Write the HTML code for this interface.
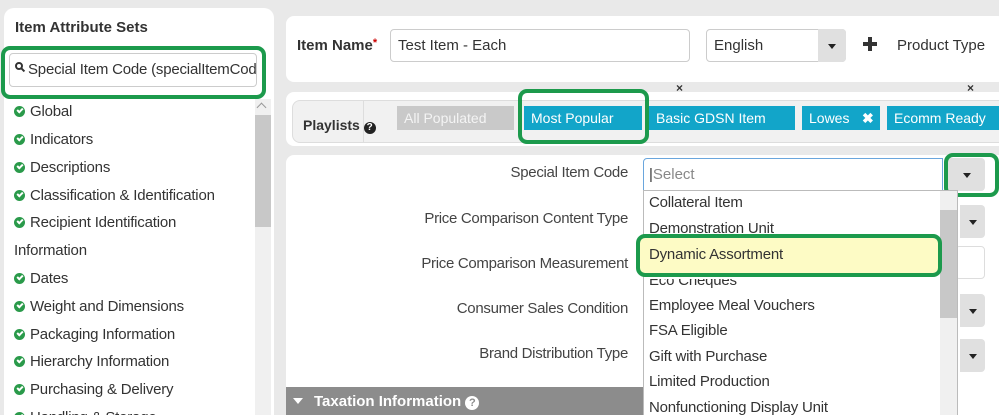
<!DOCTYPE html>
<html><head><style>
*{box-sizing:border-box;margin:0;padding:0}
html,body{width:999px;height:415px;overflow:hidden}
body{background:#e9e9e9;font-family:"Liberation Sans",Arial,sans-serif;color:#333;position:relative}
.a{position:absolute}
.g{border:4px solid #1c9a4c;border-radius:9px}
.chk{display:inline-block;width:11px;height:11px;border-radius:50%;background:#2a9a4a;margin-right:5px;position:relative;top:1px}
.chk:after{content:"";position:absolute;left:3px;top:2px;width:4px;height:2px;border-left:2px solid #fff;border-bottom:2px solid #fff;transform:rotate(-45deg)}
.li{position:absolute;left:14px;font-size:15px;color:#333;letter-spacing:-0.2px}
.lab{position:absolute;right:371px;font-size:15px;color:#444;text-align:right;letter-spacing:-0.3px}
.tag{position:absolute;top:106px;height:24px;background:#12a5c9;color:#fff;font-size:14px;line-height:24px;padding-left:7px}
.opt{position:absolute;left:649px;font-size:15px;color:#333;letter-spacing:-0.2px}
.arr{position:absolute;background:#e0e0e0;border-radius:0 4px 4px 0}
.arr:after{content:"";position:absolute;left:50%;top:50%;margin:-2px 0 0 -4px;border:4px solid transparent;border-top:5px solid #222;border-bottom:0}
</style></head><body>
<div class="a" style="left:4px;top:8px;width:270px;height:407px;background:#fff;border-radius:10px 10px 0 0"></div>
<div class="a" style="left:15px;top:19px;font-size:15px;font-weight:bold;color:#333">Item Attribute Sets</div>
<div class="a g" style="left:1px;top:46px;width:265px;height:53px"></div>
<div class="a" style="left:9px;top:53px;width:248px;height:34px;border:1px solid #ccc;border-radius:4px;background:#fff"></div>
<div class="a" style="left:15px;top:62px;width:8px;height:8px;border:2px solid #333;border-radius:50%"></div>
<div class="a" style="left:21px;top:69px;width:4px;height:2px;background:#333;transform:rotate(45deg)"></div>
<div class="a" style="left:28px;top:61px;font-size:15px;white-space:nowrap;width:228px;overflow:hidden;color:#333;letter-spacing:-0.2px">Special Item Code (specialItemCode)</div>
<div class="a" style="left:255px;top:99px;width:16px;height:316px;background:#f0f0f0"></div>
<div class="a" style="left:255px;top:115px;width:16px;height:112px;background:#c8c8c8"></div>
<div class="a" style="left:258px;top:104px;width:7px;height:7px;border-left:1px solid #999;border-top:1px solid #999;transform:rotate(45deg)"></div>
<div class="li" style="top:103px"><span class="chk"></span>Global</div>
<div class="li" style="top:131px"><span class="chk"></span>Indicators</div>
<div class="li" style="top:159px"><span class="chk"></span>Descriptions</div>
<div class="li" style="top:187px"><span class="chk"></span>Classification &amp; Identification</div>
<div class="li" style="top:214px"><span class="chk"></span>Recipient Identification</div>
<div class="li" style="top:242px">Information</div>
<div class="li" style="top:270px"><span class="chk"></span>Dates</div>
<div class="li" style="top:298px"><span class="chk"></span>Weight and Dimensions</div>
<div class="li" style="top:326px"><span class="chk"></span>Packaging Information</div>
<div class="li" style="top:353px"><span class="chk"></span>Hierarchy Information</div>
<div class="li" style="top:381px"><span class="chk"></span>Purchasing &amp; Delivery</div>
<div class="li" style="top:409px"><span class="chk"></span>Handling &amp; Storage</div>
<div class="a" style="left:286px;top:16px;width:720px;height:66px;background:#fff;border-radius:8px"></div>
<div class="a" style="left:297px;top:37px;font-size:15px;font-weight:bold">Item Name<span style="color:#c00;font-size:11px;vertical-align:top">*</span></div>
<div class="a" style="left:390px;top:29px;width:300px;height:33px;border:1px solid #ccc;border-radius:4px"></div>
<div class="a" style="left:398px;top:37px;font-size:15px">Test Item - Each</div>
<div class="a" style="left:706px;top:29px;width:140px;height:33px;border:1px solid #ccc;border-radius:4px"></div>
<div class="arr" style="left:818px;top:29px;width:28px;height:33px"></div>
<div class="a" style="left:714px;top:37px;font-size:15px">English</div>
<div class="a" style="left:863px;top:42px;width:14px;height:4px;background:#333"></div>
<div class="a" style="left:868px;top:37px;width:4px;height:14px;background:#333"></div>
<div class="a" style="left:897px;top:37px;font-size:15px">Product Type</div>
<div class="a" style="left:676px;top:81px;font-size:12px;font-weight:bold">×</div>
<div class="a" style="left:967px;top:81px;font-size:12px;font-weight:bold">×</div>
<div class="a" style="left:286px;top:92px;width:720px;height:54px;background:#fff;border-radius:8px"></div>
<div class="a" style="left:292px;top:100px;width:720px;height:43px;background:#f1f1f1;border:1px solid #ddd;border-radius:8px"></div>
<div class="a" style="left:363px;top:101px;width:1px;height:41px;background:#ddd"></div>
<div class="a" style="left:303px;top:117px;font-size:14px;font-weight:bold">Playlists <span style="display:inline-block;width:12px;height:12px;border-radius:50%;background:#222;color:#fff;font-size:10px;text-align:center;line-height:12px">?</span></div>
<div class="tag" style="left:397px;width:117px;background:#c9c9c9;color:#f4f4f4">All Populated</div>
<div class="tag" style="left:524px;width:118px">Most Popular</div>
<div class="tag" style="left:649px;width:146px">Basic GDSN Item</div>
<div class="tag" style="left:802px;width:78px">Lowes<span style="position:absolute;left:60px;font-weight:bold">✖</span></div>
<div class="tag" style="left:887px;width:120px">Ecomm Ready</div>
<div class="a g" style="left:518px;top:89px;width:131px;height:55px"></div>
<div class="a" style="left:286px;top:155px;width:720px;height:260px;background:#fff;border-radius:8px 8px 0 0"></div>
<div class="lab" style="top:164px">Special Item Code</div>
<div class="lab" style="top:210px">Price Comparison Content Type</div>
<div class="lab" style="top:255px">Price Comparison Measurement</div>
<div class="lab" style="top:300px">Consumer Sales Condition</div>
<div class="lab" style="top:345px">Brand Distribution Type</div>
<div class="arr" style="left:960px;top:205px;width:25px;height:33px"></div>
<div class="a" style="left:955px;top:246px;width:30px;height:33px;border:1px solid #ddd;border-radius:4px"></div>
<div class="arr" style="left:960px;top:294px;width:25px;height:33px"></div>
<div class="arr" style="left:960px;top:339px;width:25px;height:33px"></div>
<div class="a" style="left:286px;top:387px;width:360px;height:28px;background:#8c8c8c"></div>
<div class="a" style="left:293px;top:398px;border:5px solid transparent;border-top:6px solid #fff;border-bottom:0"></div>
<div class="a" style="left:314px;top:393px;font-size:15px;font-weight:bold;color:#fff">Taxation Information <span style="display:inline-block;width:14px;height:14px;border-radius:50%;background:#fff;color:#8c8c8c;font-size:11px;text-align:center;line-height:14px">?</span></div>
<div class="a" style="left:643px;top:158px;width:300px;height:33px;border:1px solid #6aa6dd;border-radius:4px 0 0 0;background:#fff"></div>
<div class="a" style="left:649px;top:166px;font-size:15px;color:#888"><span style="color:#333">|</span>Select</div>
<div class="arr" style="left:948px;top:158px;width:37px;height:33px"></div>
<div class="a g" style="left:944px;top:153px;width:55px;height:44px"></div>
<div class="a" style="left:643px;top:190px;width:315px;height:225px;background:#fff;border:1px solid #bbb;border-bottom:0"></div>
<div class="a" style="left:940px;top:191px;width:17px;height:224px;background:#f0f0f0"></div>
<div class="a" style="left:940px;top:210px;width:17px;height:108px;background:#c8c8c8"></div>
<div class="opt" style="top:194px">Collateral Item</div>
<div class="opt" style="top:220px">Demonstration Unit</div>
<div class="a" style="left:640px;top:237px;width:298px;height:36px;background:#fdfbc5"></div>
<div class="opt" style="top:246px">Dynamic Assortment</div>
<div class="opt" style="top:272px;clip-path:inset(7px 0 0 0)">Eco Cheques</div>
<div class="opt" style="top:297px">Employee Meal Vouchers</div>
<div class="opt" style="top:322px">FSA Eligible</div>
<div class="opt" style="top:348px">Gift with Purchase</div>
<div class="opt" style="top:373px">Limited Production</div>
<div class="opt" style="top:399px">Nonfunctioning Display Unit</div>
<div class="a g" style="left:636px;top:234px;width:306px;height:43px"></div>
</body></html>
